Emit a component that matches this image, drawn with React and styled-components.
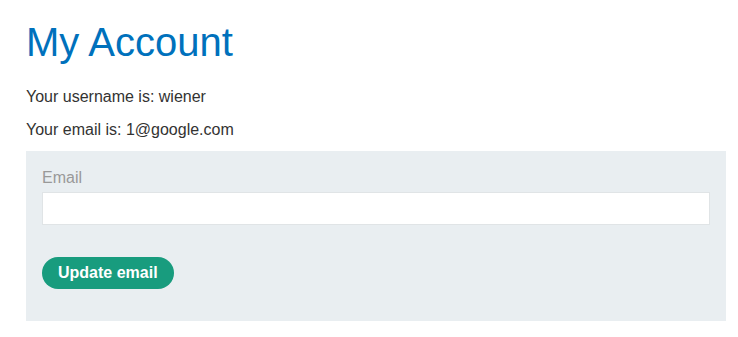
import styled, { createGlobalStyle } from "styled-components";

const GlobalStyle = createGlobalStyle`
  body {
    margin: 0;
    background: #fff;
    font-family: "Liberation Sans", Arial, sans-serif;
    color: #333332;
  }
`;

const App = () => {
  return (
    <>
      <GlobalStyle />
      <Container>
        <Title>My Account</Title>
        <Info>Your username is: wiener</Info>
        <Info $gap={13}>Your email is: 1@google.com</Info>
        <Form onSubmit={(e) => e.preventDefault()}>
          <Label htmlFor="email">Email</Label>
          <Input id="email" type="email" name="email" />
          <Button type="submit">Update email</Button>
        </Form>
      </Container>
    </>
  );
};

export default App;

const Container = styled.div`
  width: 700px;
  padding: 0 0 0 26px;
`;
const Title = styled.h1`
  margin: 0;
  padding-top: 22px;
  font-size: 40px;
  line-height: 40px;
  font-weight: 400;
  color: #0071bc;
`;
const Info = styled.p`
  margin: ${(p) => p.$gap ?? 25}px 0 0;
  font-size: 16px;
  line-height: 20px;
`;
const Form = styled.form`
  margin-top: 11px;
  background-color: #e9eef1;
  padding: 17px 16px 32px 16px;
  display: flex;
  flex-direction: column;
  align-items: flex-start;
`;
const Label = styled.label`
  font-size: 16px;
  line-height: 20px;
  color: #999;
`;
const Input = styled.input`
  margin-top: 4px;
  box-sizing: border-box;
  width: 100%;
  height: 33px;
  border: 1px solid #e0e4e6;
  background: #fff;
  outline: none;
  font-family: inherit;
  font-size: 16px;
`;
const Button = styled.button`
  margin-top: 32px;
  height: 32px;
  padding: 0 16px;
  border: none;
  border-radius: 16px;
  background-color: #189c7e;
  color: #fff;
  font-family: inherit;
  font-size: 16px;
  font-weight: 700;
  cursor: pointer;
`;
